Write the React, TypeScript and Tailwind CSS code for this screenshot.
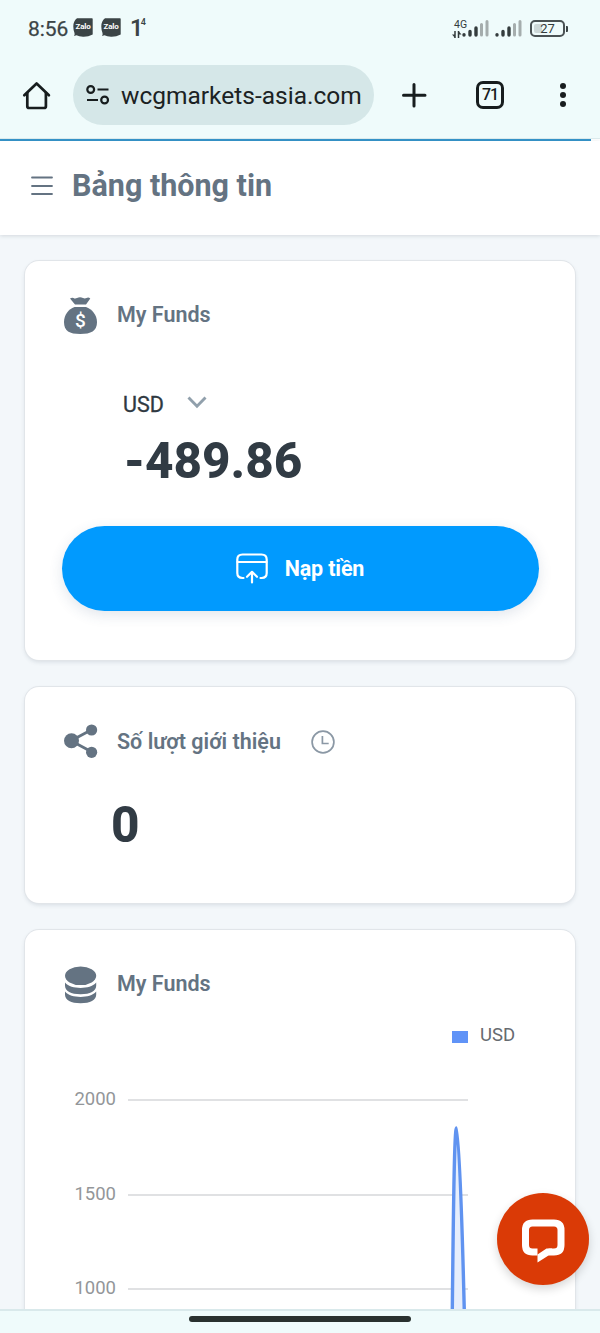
import React from 'react';

const CHART_TICKS = ['2000', '1500', '1000'];

function ZaloIcon() {
  return (
    <div className="relative w-[20px] h-[19px] -mt-[2px]">
      <svg className="absolute inset-0" width="20" height="19" viewBox="0 0 20 19">
        <path d="M4 .3H19q.7 0 .7.700V16.500Q15 19 10 18.800 6 18.700 3.500 17.300L1 18q1-1.500.5-3Q.3 12 .3 8.500.3 3 4 .3z" fill="#3b4446" />
      </svg>
      <span className="relative flex h-[18px] items-center justify-center text-[8px] leading-none font-bold text-white tracking-[-0.2px]">Zalo</span>
    </div>
  );
}

function SignalIcon() {
  return (
    <svg width="27" height="17" viewBox="0 0 27 17">
      <path d="M2 14.800v.2M8 11.500V15M14 8v7" stroke="#343c3d" strokeWidth="3.400" strokeLinecap="round" />
      <path d="M19.500 4.500V15M25 1.500V15" stroke="#a5adad" strokeWidth="3" strokeLinecap="round" />
    </svg>
  );
}

function StatusBar() {
  return (
    <div className="h-[57px] shrink-0 flex items-center pl-[28px] pr-[32px]">
      <span className="text-[21px] leading-[24px] w-[45px] text-[#3b4446] tracking-[-0.1px] [-webkit-text-stroke:0.25px_#3b4446]">8:56</span>
      <ZaloIcon />
      <div className="w-[8px]" />
      <ZaloIcon />
      <div className="ml-[9px] flex items-start text-[#3b4446]">
        <span className="text-[23px] leading-[22px] font-semibold">1</span>
        <span className="text-[9px] leading-[8px] font-semibold -ml-[2.5px]">4</span>
      </div>
      <div className="ml-auto flex items-center">
        <div className="w-[18px] flex flex-col text-[#343c3d]">
          <span className="text-[10.5px] leading-[10px] pl-[2px]">4G</span>
          <svg className="mt-[1px]" width="10" height="7" viewBox="0 0 10 7">
            <path d="M3 0v7M6.500 7V0" stroke="#343c3d" strokeWidth="1.500" fill="none" />
            <path d="M0 3.500h3V7zM6.500 0v3.500h3z" fill="#343c3d" />
          </svg>
        </div>
        <div className="-ml-[8px]">
          <SignalIcon />
        </div>
        <div className="ml-[6px]">
          <SignalIcon />
        </div>
        <div className="ml-[8px] w-[35px] h-[17px] rounded-[5px] border-2 border-[#4a5254] relative flex items-center justify-center">
          <div className="absolute left-[2px] top-[2px] w-[8px] h-[9px] rounded-l-[2px] bg-[#cdd8d8]" />
          <span className="relative text-[13px] leading-none text-[#343c3d]">27</span>
        </div>
        <div className="ml-[1px] w-[2px] h-[6px] rounded-r-[1px] bg-[#3b4446]" />
      </div>
    </div>
  );
}

function BrowserBar() {
  return (
    <div className="h-[81px] shrink-0 flex items-start pt-[8px] pl-[22px]">
      <div className="h-[60px] w-[51px] flex items-center">
        <svg width="29" height="29" viewBox="0 0 29 29" fill="none" stroke="#171d1e" strokeWidth="2.700" strokeLinecap="round" strokeLinejoin="round">
          <path d="M2.300 14.300 14.600 2.500l12.300 11.800" />
          <path d="M5.300 12v13.200q0 1.800 1.800 1.800h15q1.800 0 1.800-1.800V12" />
        </svg>
      </div>
      <div className="h-[60px] w-[301px] rounded-full bg-[#d5e7e8] flex items-center pl-[13px]">
        <svg width="24" height="20" viewBox="0 0 24 20" fill="none" stroke="#171d1e" strokeWidth="2.200">
          <circle cx="4.700" cy="4.500" r="3.400" />
          <path d="M11.500 4.500h11M1 15h11" />
          <circle cx="18.600" cy="15" r="3.400" />
        </svg>
        <span className="ml-[11px] text-[24.5px] leading-[30px] mt-[2px] text-[#1b2223] whitespace-nowrap">wcgmarkets-asia.com</span>
      </div>
      <div className="h-[60px] ml-[27px] flex items-center">
        <svg width="26" height="26" viewBox="0 0 26 26" stroke="#171d1e" strokeWidth="3" strokeLinecap="round">
          <path d="M13 2.500v21.500M2.500 13.200h21.500" />
        </svg>
      </div>
      <div className="h-[60px] ml-[49px] flex items-center">
        <div className="w-[28px] h-[28px] rounded-[7px] border-[3px] border-[#171d1e] flex items-center justify-center text-[16px] leading-none font-medium tracking-[-1px] text-[#171d1e]">
          71
        </div>
      </div>
      <div className="h-[60px] ml-[56px] flex flex-col justify-center gap-[3px]">
        <div className="w-[6px] h-[6px] rounded-full bg-[#171d1e]" />
        <div className="w-[6px] h-[6px] rounded-full bg-[#171d1e]" />
        <div className="w-[6px] h-[6px] rounded-full bg-[#171d1e]" />
      </div>
    </div>
  );
}

function Card({ className = '', children }: { className?: string; children: React.ReactNode }) {
  return (
    <div className={`mx-[25px] shrink-0 rounded-[14px] bg-white shadow-[0_0_0_1px_#e1e5e9,0_2px_4px_rgba(70,85,105,0.16)] pl-[38px] ${className}`}>
      {children}
    </div>
  );
}

function CardTitle({ icon, title }: { icon: React.ReactNode; title: string }) {
  return (
    <div className="h-[40px] flex items-center">
      <div className="w-[54px] shrink-0">{icon}</div>
      <h2 className="mt-[2px] text-[21.5px] leading-[28px] font-semibold text-[#647382] whitespace-nowrap">{title}</h2>
    </div>
  );
}

function MoneyBagIcon() {
  return (
    <div className="relative w-[35px] h-[38px] mt-[3px]">
      <svg width="35" height="38" viewBox="0 0 35 38" fill="#647382">
        <path d="M7 1.500Q9 .3 10.500 1q1.500 1 3.500.1 3-1.500 6 0 2 .8 3.500-.1 2-1 3.800.5L23 7.500H12z" />
        <path d="M11.500 10h11.500C29 12 34 18 34 25c0 9-6 12-16.800 12S1 34 1 25c0-7 4.500-13 10.500-15z" />
      </svg>
      <span className="absolute left-0 right-0 top-[13px] text-center text-[19px] leading-[22px] font-medium text-white">$</span>
    </div>
  );
}

function ShareIcon() {
  return (
    <svg width="36" height="36" viewBox="0 0 36 36" fill="#647382">
      <path d="M8 17.800 28.500 6.700M8 17.800l20.500 11" stroke="#647382" strokeWidth="2.800" />
      <circle cx="8.500" cy="17.800" r="7.500" />
      <circle cx="28.600" cy="7" r="5.600" />
      <circle cx="28.600" cy="29.300" r="5.600" />
    </svg>
  );
}

function DatabaseIcon() {
  return (
    <svg className="mt-[3px]" width="35" height="38" viewBox="0 0 35 38" fill="#647382">
      <ellipse cx="17.600" cy="9.800" rx="15.600" ry="9.300" />
      <path d="M2 16.500c3.500 4 9 5.400 15.600 5.400s12-1.400 15.600-5.400v3.300c0 5-6 8.500-15.600 8.500S2 24.800 2 19.800z" />
      <path d="M2 25.500c3.500 4 9 5.400 15.600 5.400s12-1.400 15.600-5.400v3.300c0 5-6 8.500-15.600 8.500S2 33.800 2 28.800z" />
    </svg>
  );
}

function FundsCard() {
  return (
    <Card className="h-[399px] mt-[26px] pt-[33px] pr-[37px]">
      <CardTitle icon={<MoneyBagIcon />} title="My Funds" />
      <div className="mt-[56px] pl-[60px] h-[28px] flex items-center">
        <span className="mt-[2px] text-[21.5px] leading-[28px] w-[41px] text-[#2f3941] [-webkit-text-stroke:0.3px_#2f3941]">USD</span>
        <svg className="ml-[23px] -mt-[3px]" width="20" height="13" viewBox="0 0 20 13" fill="none" stroke="#91a0ac" strokeWidth="2.900">
          <path d="m1.500 1.500 8.500 8.700 8.500-8.700" />
        </svg>
      </div>
      <div className="pl-[61px] mt-[13px] text-[49.5px] leading-[60px] font-extrabold text-[#313b44]">-489.86</div>
      <button className="mt-[35px] -ml-px w-[477px] h-[85px] rounded-full bg-[#019afe] text-white flex items-center justify-center pr-px shadow-[0_4px_14px_rgba(50,80,120,0.14)]">
        <svg width="32" height="31" viewBox="0 0 32 31" fill="none" stroke="#fff" strokeWidth="2.200" strokeLinecap="round" strokeLinejoin="round">
          <path d="M7.500 25H6.500Q1.300 24.800 1.300 20V6.500Q1.300 1.500 6.500 1.500h19q5.200 0 5.200 5V20q0 4.800-5 5H24.500" />
          <path d="M1.500 9h29M16 29.500V19.500M11 23.800l5-5 5 5" />
        </svg>
        <span className="ml-[17px] text-[21.5px] leading-[28px] font-bold tracking-[-0.15px]">Nạp tiền</span>
      </button>
    </Card>
  );
}

function ReferralCard() {
  return (
    <Card className="h-[216px] mt-[27px] pt-[34px]">
      <div className="flex items-center">
        <CardTitle icon={<ShareIcon />} title="Số lượt giới thiệu" />
        <svg className="ml-[30px] mt-[2px]" width="24" height="24" viewBox="0 0 24 24" fill="none" stroke="#8b98a5" strokeWidth="1.700">
          <circle cx="12" cy="12" r="10.900" />
          <path d="M11.400 6v7.500h6.300" />
        </svg>
      </div>
      <div className="pl-[48px] mt-[34px] text-[49.5px] leading-[60px] font-extrabold text-[#313b44]">0</div>
    </Card>
  );
}

function ChartCard() {
  return (
    <Card className="h-[420px] mt-[27px] pt-[33px]">
      <CardTitle icon={<DatabaseIcon />} title="My Funds" />
      <div className="mt-[20px] h-[24px] pl-[389px] flex items-center">
        <div className="w-[16px] h-[12px] mt-[3px] bg-[#6093f7]" />
        <span className="ml-[12px] text-[18.5px] leading-[24px] text-[#666b70]">USD</span>
      </div>
      <div className="relative mt-[39px]">
        {CHART_TICKS.map((tick) => (
          <div key={tick} className="h-[94.5px] flex items-start">
            <span className="w-[53px] text-right text-[18.5px] leading-[26px] text-[#939699]">{tick}</span>
            <div className="ml-[12px] mt-[13px] w-[340px] h-[2px] bg-[#e0e1e3]" />
          </div>
        ))}
        {/* data line, peaks near the right end of the plot */}
        <svg className="absolute left-[380px] top-[40px]" width="30" height="190" viewBox="0 0 30 190">
          <path d="M9.300 185C10.500 70 11.500 2 13.500 2S18.500 70 21.300 185" fill="#e6eefc" stroke="#6093f0" strokeWidth="3.400" strokeLinejoin="round" />
        </svg>
      </div>
    </Card>
  );
}

function ChatButton() {
  return (
    <button className="absolute left-[497px] top-[1193px] w-[92px] h-[92px] rounded-full bg-[#da3a06] flex items-center justify-center shadow-[0_4px_10px_rgba(0,0,0,0.16)]">
      <svg className="mt-[4px] mr-px" width="44" height="46" viewBox="0 0 44 46">
        <path d="M16.500 34H11.500Q4.500 34 4.500 27V12Q4.500 5 11.500 5h21.500q7 0 7 7v15q0 7-7 7H27.500" fill="none" stroke="#fff" strokeWidth="7" />
        <path d="M16.500 36.500 25.500 30.500H31v5l-3.500 2-11 7z" fill="#fff" />
      </svg>
    </button>
  );
}

export default function App() {
  return (
    <div className="relative w-[600px] h-[1333px] overflow-hidden flex flex-col bg-[#f3f7fa] font-['Roboto',sans-serif]">
      <div className="bg-[#effbfb] shrink-0">
        <StatusBar />
        <BrowserBar />
        <div className="h-[3px] flex flex-col justify-end bg-[#dcebed]">
          <div className="h-[2px] bg-white">
            <div className="w-[591px] h-[2px] bg-[#3594ca]" />
          </div>
        </div>
      </div>

      <header className="h-[94px] shrink-0 bg-white flex items-center pl-[31px] pb-[4px] shadow-[0_1px_4px_rgba(50,60,75,0.16)]">
        <svg width="22" height="20" viewBox="0 0 22 20" stroke="#647382" strokeWidth="1.800" strokeLinecap="round">
          <path d="M1 1.500h20M1 10h20M1 18h20" />
        </svg>
        <h1 className="ml-[19px] text-[30.5px] leading-[36px] font-bold text-[#647382]">Bảng thông tin</h1>
      </header>

      <main className="flex-1 min-h-0 overflow-hidden flex flex-col">
        <FundsCard />
        <ReferralCard />
        <ChartCard />
      </main>

      <footer className="h-[24px] shrink-0 border-t-2 border-[#d9e9eb] bg-[#effbfb] flex justify-center pt-[5px]">
        <div className="w-[222px] h-[6px] rounded-full bg-[#29312f]" />
      </footer>

      <ChatButton />
    </div>
  );
}
